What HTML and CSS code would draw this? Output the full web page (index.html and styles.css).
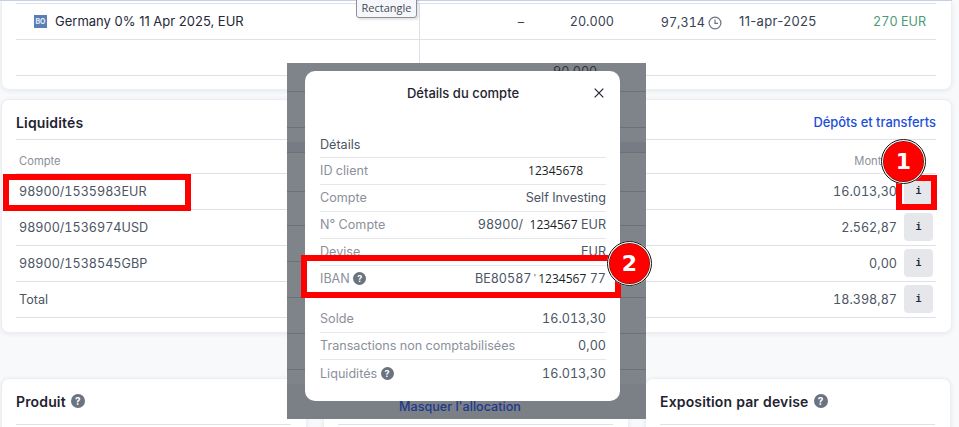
FILE: index.html
```html
<!DOCTYPE html>
<html lang="fr">
<head>
<meta charset="utf-8">
<title>Détails du compte</title>
<link rel="stylesheet" href="styles.css">
</head>
<body>
<div class="page">
  <section class="card card-top">
    <div class="pos-row">
      <div class="pos-name"><span class="badge">BO</span><span class="pos-label">Germany 0% 11 Apr 2025, EUR</span></div>
      <div class="pos-num">–</div>
      <div class="pos-num">20.000</div>
      <div class="pos-price">97,314<svg class="clock" viewBox="0 0 14 14"><circle cx="7" cy="7" r="5.9"/><path d="M7 3.6V7.3H10"/></svg></div>
      <div class="pos-date">11-apr-2025</div>
      <div class="pos-gain">270 EUR</div>
    </div>
    <div class="pos-row"><div class="pos-name"></div></div>
  </section>

  <section class="card card-cash">
    <header class="card-head">
      <h2 class="card-title">Liquidités</h2>
      <a class="link">Dépôts et transferts</a>
    </header>
    <div class="cash-head"><span>Compte</span><span class="cash-head-amount">Montant</span></div>
    <div class="cash-row"><span>98900/1535983EUR</span><span class="cash-right"><span>16.013,30</span><button class="info">i</button></span></div>
    <div class="cash-row"><span>98900/1536974USD</span><span class="cash-right"><span>2.562,87</span><button class="info">i</button></span></div>
    <div class="cash-row"><span>98900/1538545GBP</span><span class="cash-right"><span>0,00</span><button class="info">i</button></span></div>
    <div class="cash-row"><span>Total</span><span class="cash-right"><span>18.398,87</span><button class="info">i</button></span></div>
  </section>

  <div class="bottom-grid">
    <section class="card card-bottom"><h2 class="card-title">Produit <span class="help help-lg">?</span></h2></section>
    <section class="card card-bottom"><h2 class="card-title"></h2></section>
    <section class="card card-bottom"><h2 class="card-title">Exposition par devise <span class="help help-lg">?</span></h2></section>
  </div>
</div>

<div class="tooltip">Rectangle</div>

<div class="overlay">
  <span class="behind-num">90.000</span>
  <a class="behind-link">Masquer l'allocation</a>
  <div class="modal">
    <div class="modal-head">
      <span class="modal-title">Détails du compte</span>
      <svg class="close" viewBox="0 0 10 10"><path d="M.7.7 9.3 9.3M9.3.7.7 9.3"/></svg>
    </div>
    <div class="m-row m-section">Détails</div>
    <div class="m-row"><span class="m-label">ID client</span><span class="m-value"><span class="edit edit-id">12345678</span></span></div>
    <div class="m-row"><span class="m-label">Compte</span><span class="m-value">Self Investing</span></div>
    <div class="m-row"><span class="m-label">N° Compte</span><span class="m-value">98900/ <span class="edit edit-gap">1234567</span> EUR</span></div>
    <div class="m-row"><span class="m-label">Devise</span><span class="m-value">EUR</span></div>
    <div class="m-row m-group-end"><span class="m-label">IBAN <span class="help">?</span></span><span class="m-value">BE80587<span class="tick">'</span><span class="edit">1234567</span> 77</span></div>
    <div class="m-row"><span class="m-label">Solde</span><span class="m-value">16.013,30</span></div>
    <div class="m-row"><span class="m-label">Transactions non comptabilisées</span><span class="m-value">0,00</span></div>
    <div class="m-row m-last"><span class="m-label">Liquidités <span class="help">?</span></span><span class="m-value">16.013,30</span></div>
  </div>
</div>

<div class="mark mark-account"></div>
<div class="mark mark-info"></div>
<div class="mark mark-iban"></div>
<div class="step step-1">1</div>
<div class="step step-2">2</div>
</body>
</html>
```

FILE: styles.css
```css
* { box-sizing: border-box; }

html, body {
  margin: 0;
  height: 427px;
  overflow: hidden;
}

body {
  position: relative;
  width: 959px;
  background: #f8f9fb;
  font-family: Inter, "Liberation Sans", sans-serif;
  font-size: 12.6px;
  font-variant-numeric: tabular-nums;
  color: #4b5563;
}

.page {
  width: 952px;
  padding-left: 1px;
  border-top: 1px solid #c9d4ea;
}

.card {
  background: #fff;
  border: 1px solid #eceef2;
  border-radius: 8px;
  box-shadow: 0 1px 5px rgba(30, 40, 60, .08);
  padding: 0 15px 0 14px;
}

.card-top {
  height: 89px;
  margin-bottom: 9px;
  border-top: 0;
  border-radius: 0 0 8px 8px;
  padding-top: 2px;
}

.pos-row {
  display: grid;
  grid-template-columns: 404px 104px 90px 108px 104px 110px;
  height: 36px;
  align-items: stretch;
  border-top: 1px solid #dfe1e7;
  line-height: 35px;
  color: #374151;
}

.pos-row:last-child {
  height: 37px;
  border-bottom: 1px solid #dfe1e7;
}

.pos-name {
  display: flex;
  align-items: center;
  gap: 8px;
  padding: 0 0 1px 18px;
  border-right: 1px solid #dfe1e7;
  color: #1f2937;
}

.pos-label { font-variant-numeric: normal; font-size: 13px; }

.badge {
  width: 13px;
  height: 13px;
  background: #5b7fb5;
  color: #e8eef8;
  font-size: 7px;
  font-weight: 700;
  line-height: 13px;
  text-align: center;
}

.pos-num { text-align: right; }

.pos-price {
  display: flex;
  justify-content: flex-end;
  align-items: center;
  gap: 3px;
  padding-top: 1px;
}

.clock {
  width: 14px;
  height: 14px;
  margin-top: 1px;
  fill: none;
  stroke: #6b7280;
  stroke-width: 1.2;
}

.pos-date {
  padding-left: 17px;
  font-size: 13px;
  font-variant-numeric: normal;
  letter-spacing: .35px;
}

.pos-gain {
  padding-right: 10px;
  text-align: right;
  color: #4a9a78;
}

.card-cash {
  height: 234px;
  margin-bottom: 45px;
}

.card-head {
  display: flex;
  justify-content: space-between;
  align-items: center;
  height: 40px;
  padding-top: 6px;
  border-bottom: 1px solid #dfe1e7;
}

.card-title {
  margin: 0;
  font-size: 14px;
  font-weight: 600;
  letter-spacing: .15px;
  color: #1f2430;
}

.link {
  font-size: 12.9px;
  font-weight: 500;
  color: #1d4ed8;
}

.cash-head {
  display: flex;
  justify-content: space-between;
  align-items: center;
  height: 34px;
  padding: 8px 38px 0 3px;
  border-bottom: 1px solid #dfe1e7;
  font-size: 11.2px;
  color: #8b909b;
}

.cash-row {
  display: flex;
  justify-content: space-between;
  align-items: center;
  height: 36px;
  padding: 0 3px 1px;
  border-bottom: 1px solid #dfe1e7;
}

.cash-right {
  display: flex;
  align-items: center;
  gap: 7px;
}

.info {
  width: 29px;
  height: 28px;
  padding: 0;
  border: 0;
  border-radius: 4px;
  background: #e5e7eb;
  font-family: "Liberation Mono", monospace;
  font-size: 10px;
  font-weight: 700;
  color: #1f2937;
}

.bottom-grid {
  display: grid;
  grid-template-columns: repeat(3, 306px);
  gap: 16px;
}

.card-bottom {
  height: 60px;
  padding-top: 14px;
}

.card-bottom .card-title {
  display: flex;
  align-items: center;
  gap: 5px;
  height: 32px;
  border-bottom: 1px solid #dfe1e7;
  padding-bottom: 15px;
}

.help {
  display: inline-block;
  width: 13px;
  height: 13px;
  border-radius: 50%;
  background: #6b7280;
  color: #fff;
  font-size: 9px;
  font-weight: 700;
  line-height: 13px;
  text-align: center;
  vertical-align: 1px;
}

.help-lg {
  width: 14px;
  height: 14px;
  font-size: 10px;
  line-height: 14px;
}

.tooltip {
  position: absolute;
  left: 356px;
  top: -4px;
  width: 61px;
  height: 22px;
  padding-top: 3px;
  border: 1px solid #8d9097;
  border-radius: 3px;
  background: #f5f7fb;
  box-shadow: 2px 2px 2px rgba(0, 0, 0, .1);
  font-family: "Open Sans", sans-serif;
  font-size: 11px;
  line-height: 16px;
  text-align: center;
  color: #444b55;
}

.overlay {
  position: absolute;
  left: 287px;
  top: 63px;
  width: 359px;
  height: 356px;
  overflow: hidden;
  background:
    linear-gradient(to bottom,
      transparent 28px, #6c7079 28px, #6c7079 29px,
      transparent 29px, transparent 64px, #6c7079 64px, #6c7079 65px,
      transparent 65px, transparent 79px, #777b83 79px, #777b83 89px,
      #6c7079 89px, #6c7079 90px,
      transparent 90px, transparent 128px, #6c7079 128px, #6c7079 129px,
      transparent 129px, transparent 162px, #6c7079 162px, #6c7079 163px,
      transparent 163px, transparent 198px, #6c7079 198px, #6c7079 199px,
      transparent 199px, transparent 234px, #6c7079 234px, #6c7079 235px,
      transparent 235px, transparent 270px, #6c7079 270px, #6c7079 271px,
      transparent 271px, transparent 306px, #6c7079 306px, #6c7079 307px,
      transparent 307px, transparent 321px, #7b7f86 321px),
    #7f838a;
}

.behind-num {
  position: absolute;
  left: 266px;
  top: 1px;
  color: #30343b;
}

.behind-link {
  position: absolute;
  left: 112px;
  top: 336px;
  font-size: 12.6px;
  font-weight: 500;
  color: #1e3a8a;
}

.modal {
  position: absolute;
  left: 18px;
  top: 8px;
  width: 315px;
  height: 330px;
  padding: 0 14px 0 15px;
  border-radius: 10px;
  background: #fff;
}

.modal-head {
  display: flex;
  justify-content: center;
  align-items: center;
  position: relative;
  height: 60px;
  padding-bottom: 17px;
}

.modal-title {
  font-size: 13px;
  font-weight: 500;
  color: #1f2430;
}

.close {
  position: absolute;
  right: 2px;
  top: 17px;
  width: 10px;
  height: 10px;
  fill: none;
  stroke: #1f2430;
  stroke-width: 1.2;
}

.m-row {
  display: flex;
  justify-content: space-between;
  align-items: center;
  height: 27px;
  padding-bottom: 1px;
  border-bottom: 1px solid #e5e7eb;
}

.m-section { color: #4b5563; padding-bottom: 0; }

.m-group-end { margin-bottom: 13px; }

.m-last { border-bottom: 0; }

.m-label { color: #8b909b; }

.m-value { color: #4b5563; }

.tick { margin: 0 2px; font-size: 9px; vertical-align: 2px; }

.edit {
  font-family: "Open Sans", sans-serif;
  font-size: 12px;
  color: #1a1f28;
}

.edit-id { margin-right: 23px; }

.edit-gap { margin-left: 3px; }

.mark {
  position: absolute;
  border: 6px solid #f00;
}

.mark-account {
  left: 3px;
  top: 174px;
  width: 188px;
  height: 37px;
}

.mark-info {
  left: 896px;
  top: 175px;
  width: 41px;
  height: 35px;
}

.mark-iban {
  left: 301px;
  top: 255px;
  width: 320px;
  height: 43px;
}

.step {
  position: absolute;
  width: 45px;
  height: 45px;
  border: 2px solid #fff;
  border-radius: 50%;
  outline: 1px solid #111;
  outline-offset: -1px;
  box-shadow: inset 0 0 0 .5px #222;
  background: #f00;
  font-family: "DejaVu Sans", sans-serif;
  font-size: 22px;
  font-weight: 700;
  line-height: 42px;
  text-align: center;
  color: #fff;
}

.step-1 { left: 881px; top: 139px; }

.step-2 { left: 607px; top: 241px; }
```
